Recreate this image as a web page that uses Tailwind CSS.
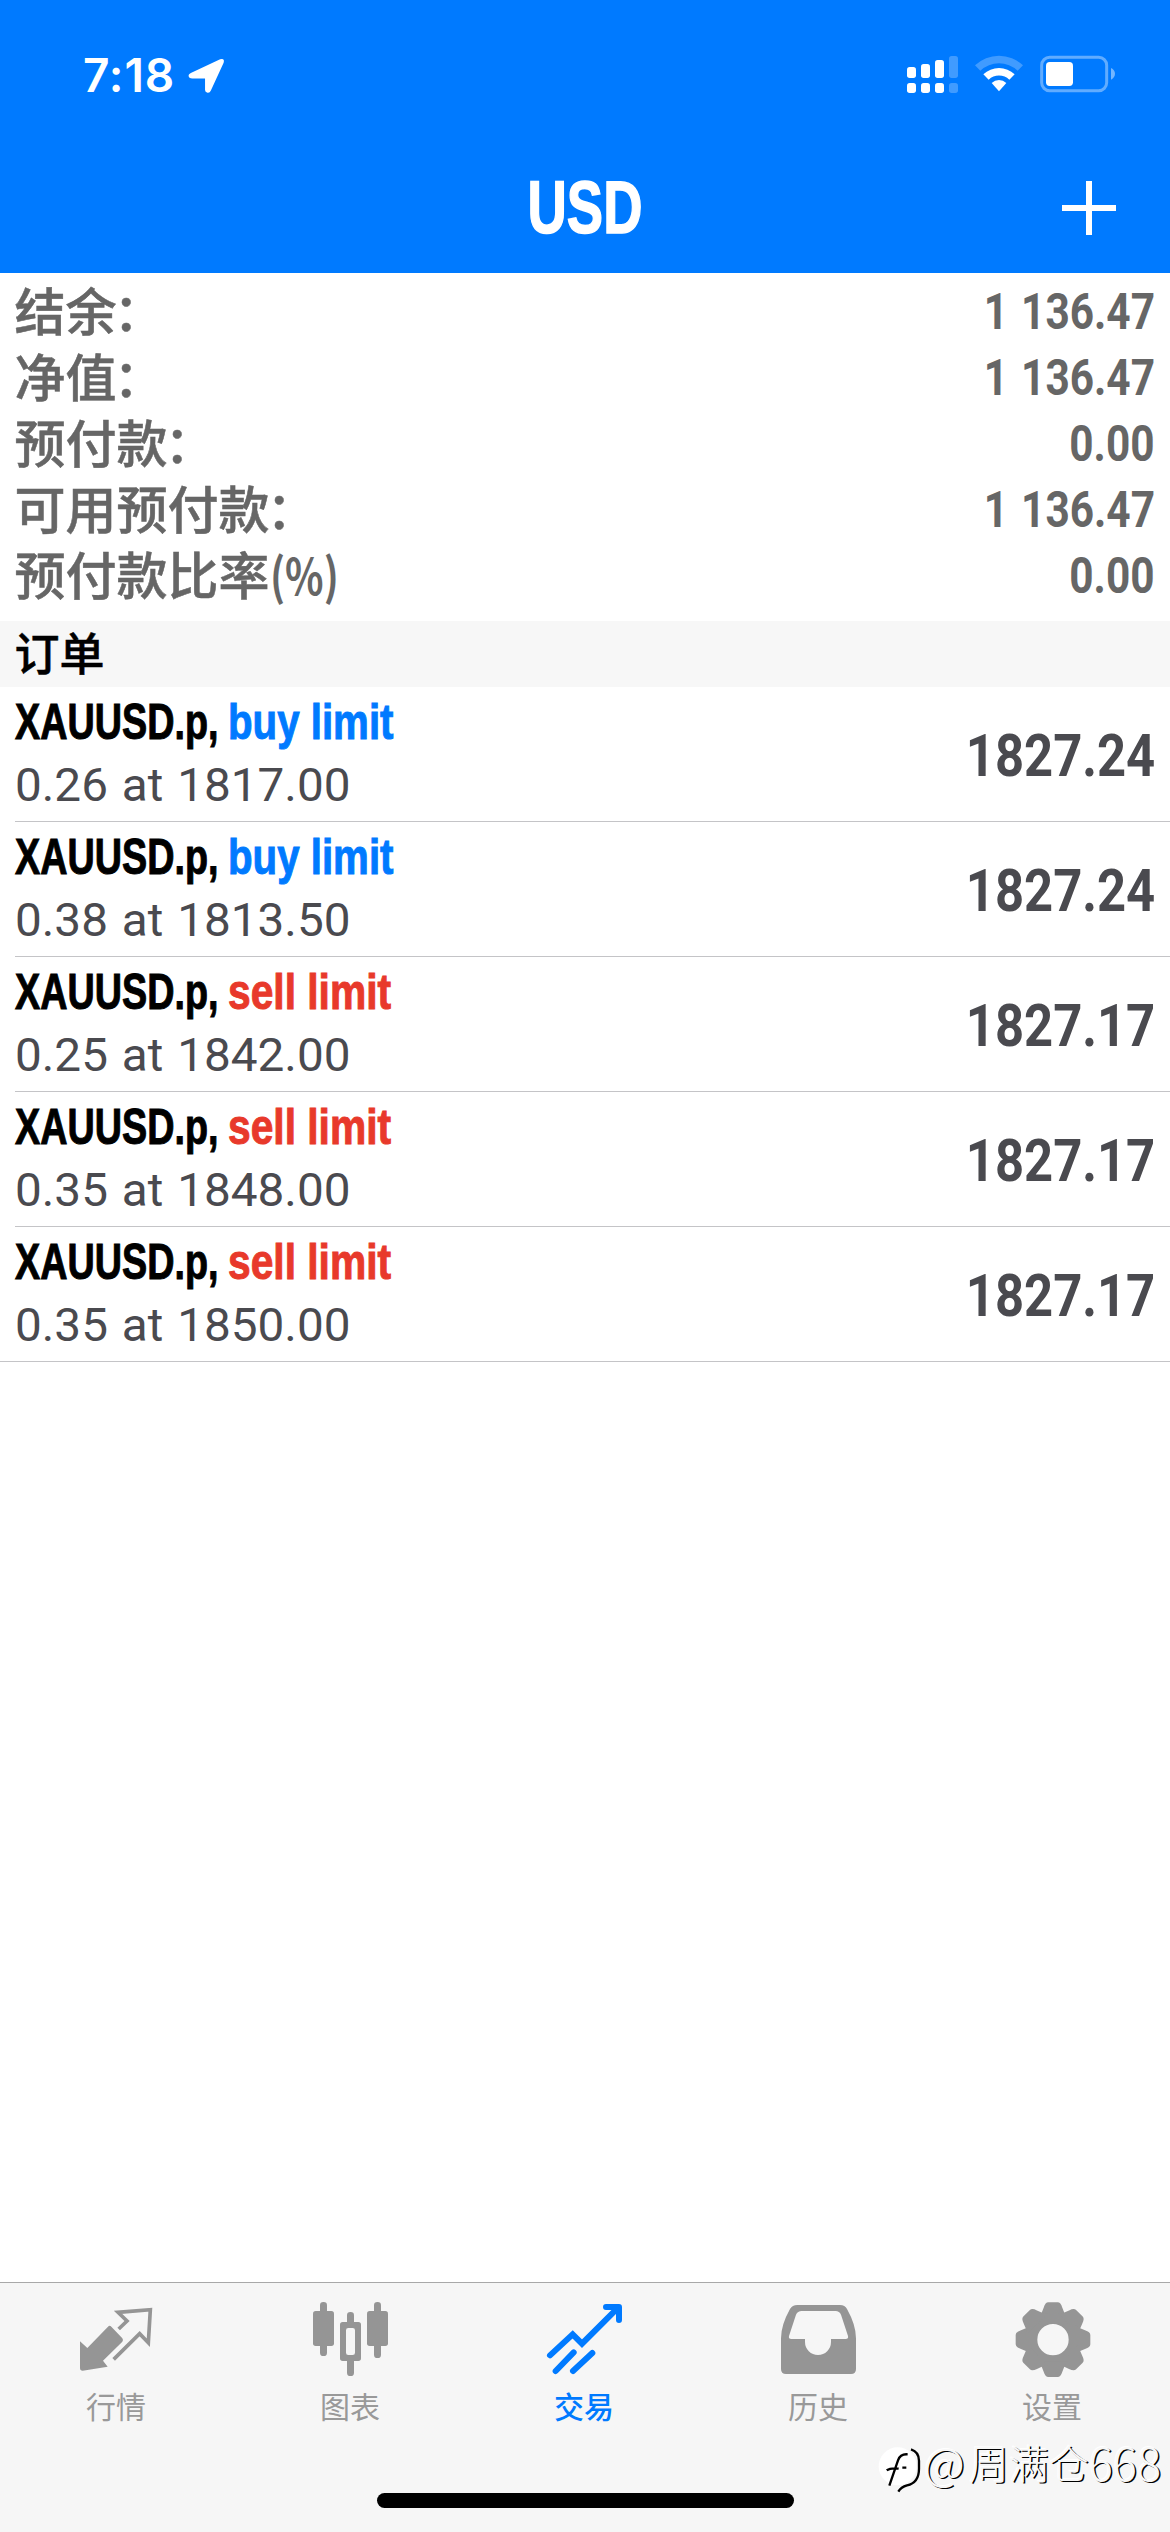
<!DOCTYPE html>
<html lang="zh-CN">
<head>
<meta charset="utf-8">
<title>USD</title>
<script src="https://cdn.jsdelivr.net/npm/@tailwindcss/browser@4"></script>
</head>
<body class="bg-white">
<div class="relative flex h-[2532px] w-[1170px] flex-col overflow-hidden bg-white font-['Liberation_Sans','Noto_Sans_CJK_SC',sans-serif]">
  <header class="flex h-[273px] flex-col bg-[#007aff] text-white">
    <div class="flex h-[140px] items-start justify-between pt-[54px] pr-[55px] pl-[83px]">
      <div class="flex h-[42px] items-center gap-[13px]">
        <span class="font-['Inter',sans-serif] text-[46px] leading-[42px] font-semibold tracking-[0.9px]">7:18</span>
        <svg class="h-[37px] w-[37px]" viewBox="0 0 38 42" preserveAspectRatio="none" fill="#fff"><path d="M4 17.500 33 2.600q5-1.400 3.600 4L23.500 38q-1.200 3-3.500 2.500-2.500-.4-2.500-3V24.500H4.500Q.6 24 .6 21.200q0-2.400 3.400-3.700z"/></svg>
      </div>
      <svg class="h-[39px] w-[208px]" viewBox="51 12 624 117" fill="#fff">
        <rect x="51" y="51" width="27" height="33" rx="8"/><rect x="93" y="42" width="27" height="42" rx="8"/><rect x="135" y="30" width="27" height="54" rx="8"/><rect x="177" y="18" width="27" height="66" rx="8" opacity=".25"/>
        <rect x="51" y="99" width="27" height="30" rx="8"/><rect x="93" y="99" width="27" height="30" rx="8"/><rect x="135" y="99" width="27" height="30" rx="8"/><rect x="177" y="99" width="27" height="30" rx="8" opacity=".25"/>
        <path d="M255 46a104 104 0 0 1 144 0l-16 16a82 82 0 0 0-112 0z" opacity=".25"/>
        <path d="M280 73a68 68 0 0 1 94 0l-16 16a45 45 0 0 0-62 0z"/>
        <path d="M305 99a32 32 0 0 1 44 0l-22 25z"/>
        <rect x="455" y="22" width="195" height="100" rx="24" fill="none" stroke="#fff" stroke-opacity=".38" stroke-width="9"/>
        <rect x="468" y="36" width="81" height="72" rx="11"/>
        <path d="M663 54q12 6 12 17.500t-12 17.500z" opacity=".45"/>
      </svg>
    </div>
    <div class="grid h-[133px] grid-cols-3 items-center">
      <span></span>
      <h1 class="origin-center scale-x-[.74] text-center text-[73.5px] leading-[135px] font-bold [-webkit-text-stroke:1.5px_#fff]">USD</h1>
      <svg class="mr-[54px] h-[54px] w-[54px] justify-self-end" viewBox="0 0 54 54"><path d="M0 27h54M27 0v54" stroke="#fff" stroke-width="6"/></svg>
    </div>
  </header>

  <section class="flex h-[348px] flex-col pt-[3px] pr-[15px] pl-[14.500px] text-[51px] leading-[66px] font-medium text-[#666]">
    <div class="flex h-[66px] justify-between"><span class="font-['Noto_Sans_CJK_SC',sans-serif] [-webkit-text-stroke:0.5px_#666]">结余<span class="-ml-[3px]">：</span></span><b class="origin-right scale-x-[.84] pt-[3px] font-['Roboto',sans-serif] text-[50.500px] leading-[66px] [word-spacing:3px]">1 136.47</b></div>
    <div class="flex h-[66px] justify-between"><span class="font-['Noto_Sans_CJK_SC',sans-serif] [-webkit-text-stroke:0.5px_#666]">净值<span class="-ml-[3px]">：</span></span><b class="origin-right scale-x-[.84] pt-[3px] font-['Roboto',sans-serif] text-[50.500px] leading-[66px] [word-spacing:3px]">1 136.47</b></div>
    <div class="flex h-[66px] justify-between"><span class="font-['Noto_Sans_CJK_SC',sans-serif] [-webkit-text-stroke:0.5px_#666]">预付款<span class="-ml-[3px]">：</span></span><b class="origin-right scale-x-[.84] pt-[3px] font-['Roboto',sans-serif] text-[50.500px] leading-[66px]">0.00</b></div>
    <div class="flex h-[66px] justify-between"><span class="font-['Noto_Sans_CJK_SC',sans-serif] [-webkit-text-stroke:0.5px_#666]">可用预付款<span class="-ml-[3px]">：</span></span><b class="origin-right scale-x-[.84] pt-[3px] font-['Roboto',sans-serif] text-[50.500px] leading-[66px] [word-spacing:3px]">1 136.47</b></div>
    <div class="flex h-[66px] justify-between"><span class="flex font-['Noto_Sans_CJK_SC',sans-serif] [-webkit-text-stroke:0.5px_#666]">预付款比率<span class="origin-left scale-x-[.80] text-[50px] font-bold [-webkit-text-stroke:0]">(%)</span></span><b class="origin-right scale-x-[.84] pt-[3px] font-['Roboto',sans-serif] text-[50.500px] leading-[66px]">0.00</b></div>
  </section>

  <h2 class="h-[66px] bg-[#f7f7f7] pl-[14.500px] font-['Noto_Sans_CJK_SC',sans-serif] text-[45px] leading-[62px] font-medium text-black [-webkit-text-stroke:0.5px_#000]">订单</h2>

  <ul id="orders" class="flex flex-col"></ul>
  <div class="flex-1"></div>

  <nav class="grid h-[250px] grid-cols-5 border-t border-[#a8a8a8] bg-[#f6f6f6] font-['Noto_Sans_CJK_SC',sans-serif] text-[30px] leading-[44px] text-[#999]">
    <a class="flex flex-col items-center gap-[5px] pt-[15px]">
      <svg class="size-20" viewBox="231 84 240 240" fill="#959595"><path d="M240 214 262 234 324 170q5-5 10 0l33 35q4 5 0 10L309 272l14 18-75 12q-8 0-8-8z"/><path d="M356 177 381 153 354 127 451 119 445 218 419 191 341 268" fill="none" stroke="#959595" stroke-width="11"/></svg>
      <span class="pr-[2px]">行情</span>
    </a>
    <a class="flex flex-col items-center gap-[5px] pt-[15px]">
      <svg class="size-20" viewBox="933 84 240 240" fill="#959595"><rect x="960" y="96" width="21" height="162" rx="10"/><rect x="939" y="123" width="63" height="105" rx="8"/><rect x="1122" y="96" width="21" height="168" rx="10"/><rect x="1101" y="123" width="63" height="105" rx="8"/><rect x="1041" y="126" width="21" height="40" rx="10"/><rect x="1041" y="260" width="21" height="58" rx="10"/><path fill-rule="evenodd" d="M1028 156h47q8 0 8 8v101q0 8-8 8h-47q-8 0-8-8V164q0-8 8-8zm17 18q-7 0-7 7v67q0 7 7 7h13q7 0 7-7v-67q0-7-7-7z"/></svg>
      <span class="pr-[2px]">图表</span>
    </a>
    <a class="flex flex-col items-center gap-[5px] pt-[15px] font-medium text-[#007aff]">
      <svg class="size-20" viewBox="435 84 240 240" fill="none" stroke="#007aff" stroke-width="18" stroke-linecap="round"><path d="M450 256 518 193 546 221 652 115"/><path d="M618 111H657V150" stroke-linejoin="round"/><path d="M467 303 521 247M519 303 577 249"/></svg>
      <span class="pr-[2px]">交易</span>
    </a>
    <a class="flex flex-col items-center gap-[5px] pt-[15px]">
      <svg class="size-20" viewBox="27 84 240 240" fill="#959595"><path fill-rule="evenodd" d="M82 105H210q15 0 21 12Q258 165 258 205V297q0 15-15 15H48q-15 0-15-15V205Q33 165 60 117 67 105 82 105zM95 123q-12 0-17 11L57 198q-2 9 7 9H105v9a39 39 0 0 0 78 0v-9H227q9 0 7-9L213 134q-5-11-16-11z"/></svg>
      <span class="pr-[2px]">历史</span>
    </a>
    <a class="flex flex-col items-center gap-[5px] pt-[15px]">
      <svg class="size-20" viewBox="-120 -125 240 240" fill="#959595"><defs><path id="tooth" d="M-43-66Q-32-82-28-96-23-112-14-112H14Q23-112 28-96 32-82 43-66z"/></defs><path fill-rule="evenodd" d="M0-84A84 84 0 1 1 0 84 84 84 0 1 1 0-84zM0-47A47 47 0 1 0 0 47 47 47 0 1 0 0-47z"/><use href="#tooth"/><use href="#tooth" transform="rotate(45)"/><use href="#tooth" transform="rotate(90)"/><use href="#tooth" transform="rotate(135)"/><use href="#tooth" transform="rotate(180)"/><use href="#tooth" transform="rotate(225)"/><use href="#tooth" transform="rotate(270)"/><use href="#tooth" transform="rotate(315)"/></svg>
      <span class="pr-[2px]">设置</span>
    </a>
  </nav>

  <div class="absolute bottom-[24px] left-[377px] h-[15px] w-[417px] rounded-full bg-black"></div>

  <div class="absolute right-[9px] bottom-[37px] flex items-start">
    <svg class="h-[50px] w-[46px]" viewBox="315 525 138 150" fill="none"><circle cx="374" cy="589" r="57" fill="#fff"/><path d="M404 553q-22-2-29 18l-26 76M341 601q12-8 36-5M388 593h12M414 538q24 8 24 34v24q0 42-36 50-18 5-26 19" stroke="#000" stroke-width="7"/></svg>
    <span class="-mt-[3px] flex font-['Noto_Sans_CJK_SC',sans-serif] text-[40px] leading-[40px] font-light text-[#f8f8f8] [text-shadow:1.5px_1px_0_#000,-1px_-1px_0_#fff]"><span class="w-[45px] text-[45px]">@</span><span>周满仓</span><span class="text-[45px]">668</span></span>
  </div>
</div>
<script>
const orders = [
  ['buy', '0.26 at 1817.00', '1827.24'],
  ['buy', '0.38 at 1813.50', '1827.24'],
  ['sell', '0.25 at 1842.00', '1827.17'],
  ['sell', '0.35 at 1848.00', '1827.17'],
  ['sell', '0.35 at 1850.00', '1827.17'],
];
const sideClass = {
  buy: 'scale-x-[.805] text-[#007aff] [-webkit-text-stroke:1px_#007aff]',
  sell: 'scale-x-[.815] text-[#e8392b] [-webkit-text-stroke:1px_#e8392b]',
};
document.getElementById('orders').innerHTML = orders.map(([side, detail, price], i) => `
  <li class="${i === orders.length - 1 ? 'pl-0' : 'pl-[15px]'}">
    <div class="flex h-[135px] items-center justify-between border-b border-[#c4c4c7] pr-[15px] ${i === orders.length - 1 ? 'pl-[15px]' : ''}">
      <div class="flex flex-col">
        <div class="flex h-[60px] text-[50px] leading-[60px] font-bold whitespace-nowrap">
          <span class="w-[213px] origin-left scale-x-[.755] text-black [-webkit-text-stroke:1px_#000]">XAUUSD.p,</span>
          <span class="origin-left ${sideClass[side]}">${side} limit</span>
        </div>
        <div class="h-[64px] origin-left scale-x-[1.025] pt-px font-['Roboto',sans-serif] text-[46.500px] leading-[64px] text-[#4a4a4f] [word-spacing:2px]">${detail}</div>
      </div>
      <div class="origin-right scale-x-[.86] pt-[4px] font-['Roboto',sans-serif] text-[59px] leading-[70px] font-bold text-[#4a4a4f]">${price}</div>
    </div>
  </li>`).join('');
</script>
</body>
</html>
